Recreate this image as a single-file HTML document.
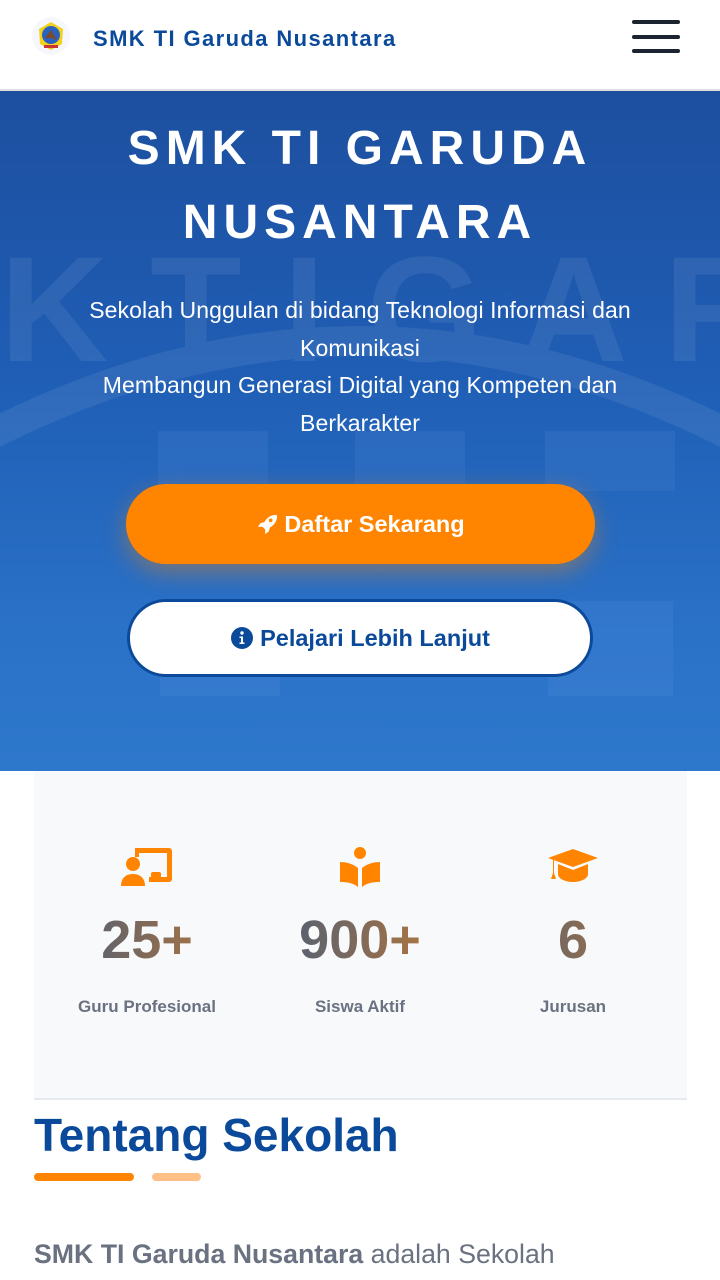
<!DOCTYPE html>
<html><head><meta charset="utf-8"><style>
*{margin:0;padding:0;box-sizing:border-box}
body{width:720px;height:1280px;overflow:hidden;background:#fff;font-family:"Liberation Sans",sans-serif;position:relative}
.nav{position:absolute;top:0;left:0;width:720px;height:91px;background:#fff;border-bottom:2px solid #ddd}
.brand{position:absolute;left:93px;top:26px;font-size:22px;font-weight:bold;color:#0b4a9b;letter-spacing:1.4px}
.burger span{position:absolute;left:632px;width:48px;height:4px;border-radius:2px;background:#1c2430}
.hero{position:absolute;top:91px;left:0;width:720px;height:680px;background:linear-gradient(180deg,#1d4f9f 0%,#1f5db4 40%,#2a72c8 80%,#2e78cc 100%);overflow:hidden}
.h1{position:absolute;top:21px;width:720px;text-align:center;color:#fff;font-weight:bold;font-size:48px;letter-spacing:6px;line-height:74px}
.sub{position:absolute;top:201px;width:720px;text-align:center;color:#fff;font-size:23px;line-height:37.5px;letter-spacing:.1px}
.btn1{position:absolute;left:126px;top:393px;width:469px;height:80px;border-radius:40px;background:#ff8500;color:#fff;font-weight:bold;font-size:23.5px;text-align:center;line-height:80px;box-shadow:0 8px 24px rgba(255,133,0,.4)}
.btn2{position:absolute;left:127px;top:508px;width:466px;height:78px;border-radius:39px;background:#fff;border:3px solid #0b4a9b;color:#0b4a9b;font-weight:bold;font-size:23.5px;text-align:center;line-height:72px}
.stats{position:absolute;left:34px;top:771px;width:653px;height:329px;background:#f8f9fa;border-bottom:2px solid #e6eaf0}
.st{position:absolute;top:0;width:218px;text-align:center}
.num{position:absolute;top:138px;width:100%;font-size:54px;font-weight:bold;background:linear-gradient(90deg,#3d5a80,#c47a33);-webkit-background-clip:text;color:transparent}
.lbl{position:absolute;top:226px;width:100%;font-size:17px;font-weight:bold;color:#6a7181}
.ic{position:absolute;top:75px;left:50%;transform:translateX(-50%)}
h2{position:absolute;left:34px;top:1108px;font-size:46px;color:#0b4a9b;font-weight:bold}
.bar1{position:absolute;left:34px;top:1173px;width:100px;height:8px;border-radius:4px;background:#ff8500}
.bar2{position:absolute;left:152px;top:1173px;width:49px;height:8px;border-radius:4px;background:#ffc088}
.p{position:absolute;left:34px;top:1239px;font-size:26.7px;color:#6a7181}
</style></head><body>
<div class="nav">
<svg style="position:absolute;left:31px;top:16px" width="40" height="40" viewBox="0 0 40 40"><circle cx="20" cy="20" r="19" fill="#eef2fb" opacity=".6"/><path d="M20 6 L32 13 L31 28 L20 34 L9 28 L8 13Z" fill="#f3d21b"/><circle cx="20" cy="19" r="9" fill="#2a62c0"/><path d="M14 22 L20 14 L26 24 L20 22Z" fill="#7a4a2a"/><rect x="13" y="29" width="14" height="3" fill="#c33"/></svg>
<div class="brand">SMK TI Garuda Nusantara</div>
<div class="burger"><span style="top:20px"></span><span style="top:35px"></span><span style="top:49px"></span></div>
</div>
<div class="hero">
<svg width="720" height="680" style="position:absolute;left:0;top:0;opacity:.07">
<path d="M-40 360 Q360 140 760 360" stroke="#fff" stroke-width="30" fill="none"/>
<text x="0" y="270" font-family="Liberation Sans" font-weight="bold" font-size="150" fill="#fff">K T I G A R U</text>
<g fill="#9cc3ff"><rect x="158" y="340" width="110" height="60"/><rect x="355" y="340" width="110" height="60"/><rect x="545" y="340" width="130" height="60"/><rect x="548" y="510" width="125" height="95"/><rect x="160" y="515" width="120" height="90"/></g>
</svg>
<div class="h1">SMK TI GARUDA<br>NUSANTARA</div>
<div class="sub">Sekolah Unggulan di bidang Teknologi Informasi dan<br>Komunikasi<br>Membangun Generasi Digital yang Kompeten dan<br>Berkarakter</div>
<div class="btn1"><svg width="22" height="22" viewBox="0 0 24 24" style="vertical-align:-3px;margin-right:6px"><path d="M22 2c-6 0-10 3-13 8l-4 1-3 4 5 0 3 3 0 5 4-3 1-4c5-3 8-7 8-13zM16 6a2 2 0 110 4 2 2 0 010-4z" fill="#fff"/></svg>Daftar Sekarang</div>
<div class="btn2"><svg width="24" height="24" viewBox="0 0 24 24" style="vertical-align:-4px;margin-right:6px"><circle cx="12" cy="12" r="11" fill="#0b4a9b"/><circle cx="12" cy="7" r="1.7" fill="#fff"/><path d="M9.5 10.5h3.5v6h1.5v1.5h-5v-1.5h1.5v-4.5h-1.5z" fill="#fff"/></svg>Pelajari Lebih Lanjut</div>
</div>
<div class="stats">
<div class="st" style="left:4px"><svg class="ic" width="52" height="42" viewBox="0 0 52 42"><path d="M14 2h34a3 3 0 013 3v28a3 3 0 01-3 3H28v-5h18V7H18v4h-4z" fill="#ff8500"/><rect x="30" y="26" width="10" height="6" rx="2" fill="#ff8500"/><circle cx="12" cy="18" r="7" fill="#ff8500"/><path d="M0 40c0-8 5-12 12-12s12 4 12 12z" fill="#ff8500"/></svg><div class="num">25+</div><div class="lbl">Guru Profesional</div></div>
<div class="st" style="left:217px"><svg class="ic" width="42" height="42" viewBox="0 0 42 42"><circle cx="21" cy="7" r="6" fill="#ff8500"/><path d="M1 16c7 0 13 2 18 6v19c-5-4-11-5-18-5z" fill="#ff8500"/><path d="M41 16c-7 0-13 2-18 6v19c5-4 11-5 18-5z" fill="#ff8500"/></svg><div class="num">900+</div><div class="lbl">Siswa Aktif</div></div>
<div class="st" style="left:430px"><svg class="ic" width="52" height="40" viewBox="0 0 52 40"><path d="M26 3L51 12 26 21 1 12z" fill="#ff8500"/><path d="M11 18v10c0 5 8 8 15 8s15-3 15-8V18l-15 6z" fill="#ff8500"/><path d="M6 13v14l-2 6h5l-2-6V13z" fill="#ff8500"/></svg><div class="num">6</div><div class="lbl">Jurusan</div></div>
</div>
<h2>Tentang Sekolah</h2>
<div class="bar1"></div><div class="bar2"></div>
<div class="p"><b>SMK TI Garuda Nusantara</b> adalah Sekolah</div>
</body></html>
